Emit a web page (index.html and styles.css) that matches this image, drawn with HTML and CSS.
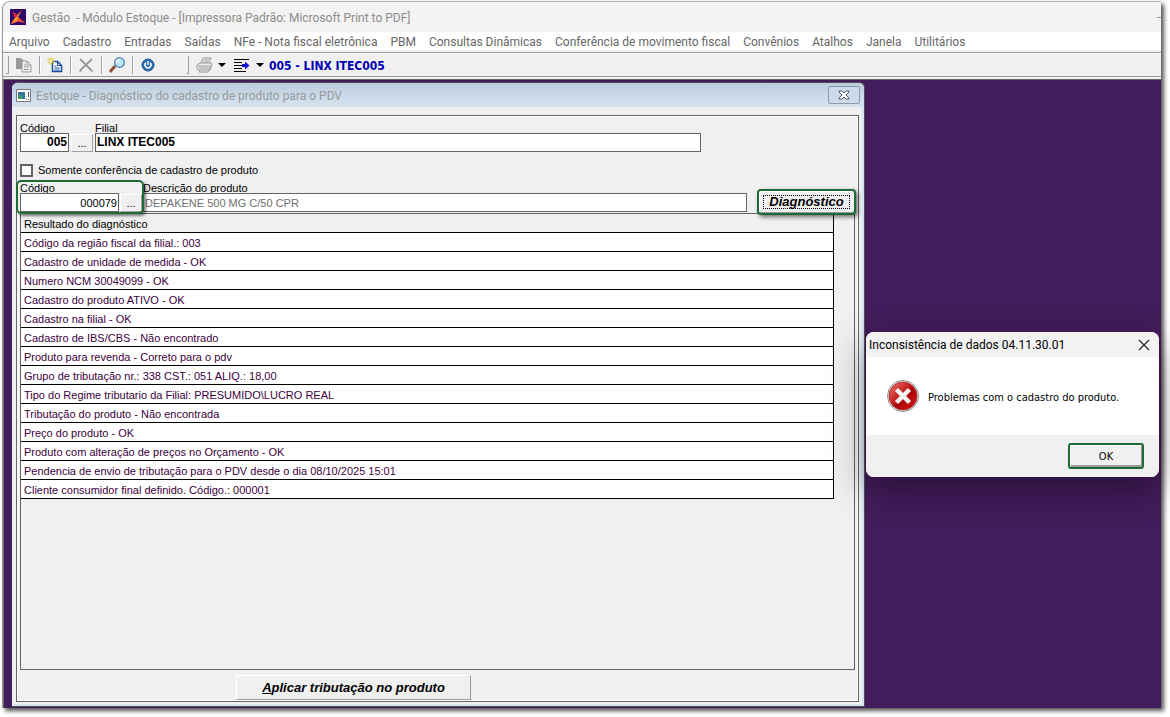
FILE: index.html
```html
<!DOCTYPE html>
<html lang="pt-BR">
<head>
<meta charset="utf-8">
<title>Gestão - Módulo Estoque</title>
<link rel="stylesheet" href="styles.css">
</head>
<body>
<div class="app">
  <header class="titlebar">
    <svg class="logo" width="16" height="16" viewBox="0 0 16 16"><rect width="16" height="16" fill="#32096b"/><path d="M12 1L8 7.500 10 10 15.500 14 8.500 12.500 1 15 5 9 3 3 7.500 6Z" fill="#ff5a2c"/><path d="M12 1L8 7.500 7.500 11 1 15 5 9Z" fill="#ffa02a"/><path d="M3 3L7.500 6.500 5.500 9Z" fill="#e3184d"/></svg>
    <span class="app-title">Gestão&nbsp; - Módulo Estoque - [Impressora Padrão: Microsoft Print to PDF]</span>
    <span class="minimize"></span>
  </header>
  <nav class="menu">
    <button>Arquivo</button><button>Cadastro</button><button>Entradas</button><button>Saídas</button><button>NFe - Nota fiscal eletrônica</button><button>PBM</button><button>Consultas Dinâmicas</button><button>Conferência de movimento fiscal</button><button>Convênios</button><button>Atalhos</button><button>Janela</button><button>Utilitários</button>
  </nav>
  <div class="toolbar">
    <span class="grip"></span>
    <button class="tool" aria-label="Copiar"><svg width="16" height="16" viewBox="0 0 16 16"><path d="M0 1h5l3 3v8H0z" fill="#999"/><path d="M6 4h5l4 4v7H6z" fill="#f0f0f0" stroke="#999"/><path d="M11 4v4h4M8 8h2M8 10h5M8 12.500h5" fill="none" stroke="#999"/></svg></button>
    <span class="sep"></span>
    <button class="tool" aria-label="Novo"><svg width="16" height="16" viewBox="0 0 16 16"><path d="M5.500 4.500h5l4 4v6h-9z" fill="#fff" stroke="#164b9b" stroke-width="1.500"/><path d="M10.500 4.500v4h4M7.500 9h2M7.500 11h5M7.500 13h5" fill="none" stroke="#164b9b"/><path d="M1 1l6 6M7 1L1 7M4 0v8M0 4h8" stroke="#e7c62c"/><path d="M3 3h2v2H3z" fill="#fff9a0"/></svg></button>
    <span class="sep"></span>
    <button class="tool" aria-label="Excluir"><svg width="16" height="16" viewBox="0 0 16 16"><path d="M2 2l12 12M14 2L2 13.500" stroke="#999" stroke-width="1.800"/><path d="M1 14h3M13 14h2" stroke="#999"/></svg></button>
    <span class="sep"></span>
    <button class="tool" aria-label="Localizar"><svg width="16" height="16" viewBox="0 0 16 16"><path d="M1 15l5-6" stroke="#a4571d" stroke-width="3"/><path d="M1 14l5-5" stroke="#4a4b77"/><circle cx="10.500" cy="5.500" r="4.800" fill="#b8e6ff" stroke="#4e76b8" stroke-width="1.300"/><path d="M7.500 6q0-3 3-3" stroke="#fff" stroke-width="1.600" fill="none"/></svg></button>
    <span class="sep"></span>
    <button class="tool" aria-label="Sair"><svg width="16" height="16" viewBox="0 0 16 16"><circle cx="8" cy="8" r="6" fill="#2d6fb0" stroke="#15538f"/><path d="M5.800 5.800a3 3 0 1 0 4.400 0M8 4v4" fill="none" stroke="#fff" stroke-width="1.400"/></svg></button>
    <span class="grip grip-second"></span>
    <button class="tool" aria-label="Imprimir"><svg width="17" height="16" viewBox="0 0 17 16"><path d="M5 6l2-5h8l-2 5M1 8l3-2h11l1 2-2 5H3l-2-1zM2 9h11M3 11h10M4 13l-1 2h9l2-3M8 3h5M7 5h5M14 8v4" fill="none" stroke="#999"/></svg></button>
    <span class="caret"></span>
    <button class="tool tool-actions" aria-label="Ações"><svg width="16" height="16" viewBox="0 0 16 16"><path d="M0 2.500h15M0 5.500h8M0 8.500h8M0 11.500h8M0 14.500h12" stroke="#000"/><path d="M8 7h3V4.500l4.500 4-4.500 4V10H8z" fill="#1010d8"/></svg></button>
    <span class="caret"></span>
    <strong class="branch">005 - LINX ITEC005</strong>
  </div>

  <main class="workspace">
    <section class="child">
      <header class="child-title">
        <svg width="15" height="13" viewBox="0 0 15 13"><path d="M.5.500h14v12H.5z" fill="#fff" stroke="#777"/><path d="M2 3h7v7H2z" fill="#39729b"/><path d="M2 6h5v4H2z" fill="#3c9a78"/><path d="M10 10h1M12.500 3v5M12.500 10v1" stroke="#555"/></svg>
        <h1>Estoque - Diagnóstico do cadastro de produto para o PDV</h1>
        <button class="child-close" aria-label="Fechar janela"><svg width="12" height="10" viewBox="0 0 12 10"><path d="M1 1h3l2 2 2-2h3v1L8 5l3 3v1H8L6 7 4 9H1V8l3-3-3-3z" fill="#fff" stroke="#4b5568"/></svg></button>
      </header>
      <form class="panel">
        <div class="row row-branch">
          <div class="field w-code"><label for="fil">Código</label><input id="fil" class="strong right" value="005"></div>
          <button type="button" class="dots" aria-label="Buscar filial">...</button>
          <div class="field grow"><label for="filn">Filial</label><input id="filn" class="strong" value="LINX ITEC005"></div>
        </div>
        <div class="check"><input type="checkbox" id="so"><label for="so">Somente conferência de cadastro de produto</label></div>
        <div class="row row-product">
          <div class="marked">
            <div class="field w-product"><label for="prod">Código</label><input id="prod" class="right" value="000079"></div>
            <button type="button" class="dots" aria-label="Buscar produto">...</button>
          </div>
          <div class="field grow"><label for="desc">Descrição do produto</label><input id="desc" class="muted" value="DEPAKENE 500 MG C/50 CPR"></div>
          <button type="button" class="diagnose"><span>Diagnóstico</span></button>
        </div>
        <div class="results">
          <table>
            <thead><tr><th>Resultado do diagnóstico</th></tr></thead>
            <tbody>
              <tr><td>Código da região fiscal da filial.: 003</td></tr>
              <tr><td>Cadastro de unidade de medida - OK</td></tr>
              <tr><td>Numero NCM 30049099 - OK</td></tr>
              <tr><td>Cadastro do produto ATIVO - OK</td></tr>
              <tr><td>Cadastro na filial - OK</td></tr>
              <tr><td>Cadastro de IBS/CBS - Não encontrado</td></tr>
              <tr><td>Produto para revenda - Correto para o pdv</td></tr>
              <tr><td>Grupo de tributação nr.: 338 CST.: 051 ALIQ.: 18,00</td></tr>
              <tr><td>Tipo do Regime tributario da Filial: PRESUMIDO\LUCRO REAL</td></tr>
              <tr><td>Tributação do produto - Não encontrada</td></tr>
              <tr><td>Preço do produto - OK</td></tr>
              <tr><td>Produto com alteração de preços no Orçamento - OK</td></tr>
              <tr><td>Pendencia de envio de tributação para o PDV desde o dia 08/10/2025 15:01</td></tr>
              <tr><td>Cliente consumidor final definido. Código.: 000001</td></tr>
            </tbody>
          </table>
        </div>
        <div class="actions"><button type="button" class="apply"><u>A</u>plicar tributação no produto</button></div>
      </form>
    </section>

    <div class="dialog" role="alertdialog" aria-labelledby="dt">
      <header><h2 id="dt">Inconsistência de dados 04.11.30.01</h2>
        <button aria-label="Fechar"><svg width="12" height="12" viewBox="0 0 12 12"><path d="M1 1l10 10M11 1L1 11" stroke="#222" stroke-width="1.200"/></svg></button></header>
      <div class="dialog-body">
        <svg width="32" height="32" viewBox="0 0 32 32"><defs><linearGradient id="red" x1="0" y1="0" x2="1" y2="1"><stop offset="0" stop-color="#e88078"/><stop offset=".45" stop-color="#c8191c"/><stop offset=".55" stop-color="#a80508"/><stop offset="1" stop-color="#e01812"/></linearGradient></defs><circle cx="16" cy="16" r="15.500" fill="#fff" stroke="#888"/><circle cx="16" cy="16" r="14" fill="url(#red)" stroke="#a33"/><path d="M9.500 9.500l13 13M22.500 9.500l-13 13" stroke="#f2f2f2" stroke-width="4.500"/></svg>
        <p>Problemas com o cadastro do produto.</p>
      </div>
      <footer><button>OK</button></footer>
    </div>
  </main>
</div>
</body>
</html>
```
FILE: styles.css
```css
* { box-sizing: border-box; }
body {
  margin: 0;
  min-height: 100vh;
  padding: 1px 9px 9px 2px;
  display: flex;
  background: #fff;
  font: 11px/19px "Liberation Sans", Arial, sans-serif;
  color: #000;
}
button { font: inherit; color: inherit; border: 0; background: none; padding: 0; margin: 0; }
h1, h2, p { margin: 0; font-weight: 400; }
.app {
  flex: 1;
  min-width: 0;
  display: flex;
  flex-direction: column;
  border-top: 1px solid #b0b0b0;
  border-left: 1px solid #999;
  border-top-left-radius: 8px;
  background: #f0f0f0;
  box-shadow: 3px 3px 4px #555;
}
.titlebar {
  height: 30px;
  display: flex;
  align-items: center;
  padding-left: 7px;
  gap: 6px;
  background: #f3f3f3;
  border-top-left-radius: 8px;
  color: #8c8c8c;
}
.app-title, .menu, .child-title h1, .dialog h2 {
  font-family: Roboto, "Open Sans", sans-serif;
  font-size: 12px;
  white-space: nowrap;
}
.app-title, .child-title h1, .dialog h2 { padding-top: 2px; }
.minimize { width: 4px; height: 1px; margin-left: auto; background: #999; }
.menu {
  height: 18px;
  display: flex;
  align-items: center;
  gap: 13px;
  padding: 2px 0 0 6px;
  background: #fff;
  color: #666;
}
.toolbar {
  height: 25px;
  margin-top: 2px;
  display: flex;
  align-items: center;
  border-top: 1px solid #999;
  border-bottom: 1px solid #999;
  box-shadow: inset 0 1px #fff;
}
.tool { display: flex; margin: 0 8px 0 7px; }
.sep { width: 2px; height: 18px; margin: 0 -1px; border-left: 1px solid #a0a0a0; border-right: 1px solid #fff; }
.grip { width: 3px; height: 18px; margin-left: 3px; border: 1px solid #a0a0a0; border-width: 0 1px 1px 0; }
.grip-second { margin-left: 22px; }
.caret { margin: 0 1px; border: 4px solid transparent; border-top-color: #000; border-bottom: 0; }
.grip-second + .tool { margin-right: 4px; }
.tool-actions { margin-right: 5px; }
.branch {
  margin-left: 4px;
  padding-top: 2px;
  color: #0000b4;
  font: bold 12px "DejaVu Sans Condensed", Tahoma, sans-serif;
}
.workspace {
  flex: 1;
  position: relative;
  display: flex;
  margin-top: 2px;
  padding: 2px 296px 1px 8px;
  border-top: 1px solid #666;
  border-left: 1px solid #666;
  background: #431c5b;
}
.child {
  flex: 1;
  min-width: 0;
  display: flex;
  flex-direction: column;
  padding: 0 5px 4px 4px;
  border: 1px solid #505058;
  border-left-width: 0;
  border-radius: 6px 6px 0 0;
  background: #f0f0f0;
  box-shadow: inset 2px 0 #e8eef8, inset -2px -2px #d6e4f2;
}
.child-title {
  height: 24px;
  display: flex;
  align-items: center;
  gap: 5px;
  margin: 0 -5px 8px -4px;
  padding: 0 4px;
  border-radius: 6px 6px 0 0;
  background: linear-gradient(#bdccdc, #d6e4f2);
}
.child-title h1 { color: #999; }
.child-close {
  display: grid;
  place-items: center;
  width: 32px;
  height: 18px;
  margin-left: auto;
  border: 1px solid #8c98b4;
  border-radius: 2px;
  background: #cddaea;
}
.panel {
  flex: 1;
  display: flex;
  flex-direction: column;
  margin: 0;
  padding: 6px 3px 1px;
  border: 1px solid #646464;
  box-shadow: inset 1px 1px #fff, inset -1px -1px #fff;
}
.row { display: flex; align-items: flex-end; }
.row-branch { gap: 2px; padding-right: 154px; }
.field { display: flex; flex-direction: column; }
.field label { padding-top: 1px; line-height: 10px; white-space: nowrap; }
.field input {
  width: 100%;
  height: 19px;
  padding: 0 1px;
  border: 1px solid #646464;
  border-radius: 0;
  background: #fff;
  font: inherit;
  line-height: 17px;
  color: #000;
}
.field .strong { padding-bottom: 2px; font-size: 12px; font-weight: 700; }
.field .muted { color: #6e6e6e; }
.field .right { text-align: right; }
.grow { flex: 1; min-width: 0; }
.w-code { width: 49px; }
.w-product { width: 99px; }
.dots {
  width: 22px;
  height: 18px;
  border: 1px solid #fff;
  border-right-color: #a0a0a0;
  border-bottom-color: #a0a0a0;
  line-height: 16px;
}
.check { display: flex; align-items: center; gap: 5px; height: 16px; margin: 10px 0 4px; }
.check input {
  appearance: none;
  width: 13px;
  height: 13px;
  margin: 0;
  border: 2px solid #646464;
  background: #fff;
}
.marked { position: relative; z-index: 1; display: flex; align-items: flex-end; gap: 1px; padding-right: 1px; }
.marked::after {
  content: "";
  position: absolute;
  inset: -2px -1px -2px -4px;
  border: 2px solid #1e6b34;
  border-radius: 5px;
  box-shadow: 2px 2px 3px rgba(0, 0, 0, .5);
  pointer-events: none;
}
.diagnose {
  position: relative;
  z-index: 1;
  width: 99px;
  height: 26px;
  margin: 0 -1px -3px 10px;
  padding: 4px;
  border: 2px solid #1e6b34;
  border-radius: 4px;
  background: #f0f0f0;
  box-shadow: 2px 2px 4px rgba(0, 0, 0, .55), inset 1px 1px #fff, inset 0 -1px #999;
}
.diagnose span { display: block; border: 1px dotted #000; line-height: 12px; }
.diagnose, .apply { font-size: 13px; font-weight: 700; font-style: italic; white-space: nowrap; }
.results {
  flex: 1;
  margin-top: 1px;
  padding-right: 20px;
  border: 1px solid #646464;
}
.results table { width: 100%; border-collapse: separate; border-spacing: 0; border-right: 1px solid #000; }
.results th, .results td {
  height: 19px;
  padding: 2px 3px 0;
  border-bottom: 1px solid #000;
  text-align: left;
  font-weight: 400;
  line-height: 16px;
}
.results td { background: #fff; color: #3c003c; }
.actions { padding: 5px 0 0 216px; }
.apply {
  width: 235px;
  height: 25px;
  border: 1px solid #fff;
  border-right-color: #999;
  border-bottom-color: #999;
}
.dialog {
  position: absolute;
  top: 252px;
  right: 2px;
  width: 293px;
  border-radius: 8px;
  overflow: hidden;
  background: #fff;
  box-shadow: 0 12px 36px rgba(0, 0, 0, .4);
}
.dialog header { display: flex; justify-content: space-between; align-items: center; height: 25px; padding: 0 9px 0 3px; background: #f3f3f3; }
.dialog header button { display: flex; }
.dialog-body { display: flex; align-items: center; gap: 9px; height: 78px; padding-left: 21px; }
.dialog p, .dialog footer { font-family: "DejaVu Sans Condensed", Tahoma, sans-serif; }
.dialog p { padding-top: 2px; }
.dialog footer { display: flex; justify-content: flex-end; height: 42px; padding: 8px 15px; background: #f0f0f0; }
.dialog footer button {
  width: 76px;
  height: 26px;
  border: 2px solid #1e6b34;
  border-radius: 3px;
  box-shadow: inset 1px 1px #fff, inset -1px -2px #999;
}
```
